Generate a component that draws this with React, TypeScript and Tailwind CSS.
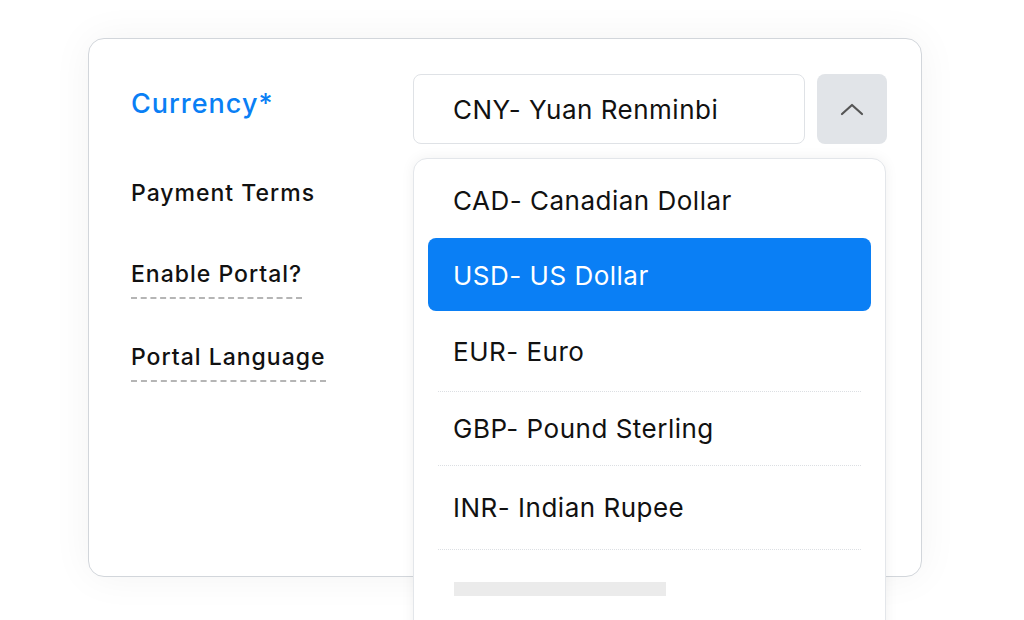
import React from "react";

const font = { fontFamily: "Inter, 'Noto Sans', sans-serif" };

function Label({ children, dashed, className }: { children: React.ReactNode; dashed?: boolean; className?: string }) {
  return (
    <div className={className}>
      <span
        className={
          "inline-block text-[23px] font-medium tracking-[1px] text-[#111] leading-[28px] " +
          (dashed ? "border-b-2 border-dashed border-[#b5b5b5] pb-[9px]" : "")
        }
      >
        {children}
      </span>
    </div>
  );
}

export default function App() {
  const dividers = "border-b border-dotted border-[#dcdfe3]";
  return (
    <div className="relative w-[1024px] h-[620px] overflow-hidden bg-white" style={font}>
      <div className="ml-[88px] mt-[38px] w-[834px] h-[539px] rounded-[16px] border border-[#d2d6db] bg-white shadow-[0_0_40px_rgba(0,0,0,0.05)] flex">
        <div className="w-[324px] pl-[42px] pt-[49px] flex flex-col">
          <div className="text-[27px] leading-[32px] tracking-[1px] text-[#0a7ff5] font-medium">Currency*</div>
          <Label className="mt-[59px]">Payment Terms</Label>
          <Label dashed className="mt-[53px]">Enable Portal?</Label>
          <Label dashed className="mt-[44px]">Portal Language</Label>
        </div>
        <div className="pt-[35px] flex gap-[12px] h-fit">
          <div className="w-[392px] h-[70px] rounded-[8px] border border-[#dfe2e6] flex items-center pl-[39px] text-[26px] tracking-[0.5px] text-[#111]">
            CNY- Yuan Renminbi
          </div>
          <div className="w-[70px] h-[70px] rounded-[8px] bg-[#e1e4e8] flex items-center justify-center">
            <svg width="24" height="14" viewBox="0 0 24 14" fill="none">
              <path d="M2 12 L12 3 L22 12" stroke="#555" strokeWidth="2.2" strokeLinecap="round" strokeLinejoin="round" />
            </svg>
          </div>
        </div>
      </div>

      <div className="absolute left-[413px] top-[158px] w-[473px] h-[500px] rounded-[14px] border border-[#e3e6ea] bg-white shadow-[0_0_14px_rgba(0,0,0,0.06)] px-[14px] text-[26px] tracking-[0.5px] text-[#111]">
        <div className="h-[79px] flex items-center pl-[25px] pt-[4px]">CAD- Canadian Dollar</div>
        <div className="h-[73px] flex items-center pl-[25px] pt-[2px] rounded-[8px] bg-[#0a7ff5] text-white">USD- US Dollar</div>
        <div className="mx-[10px]">
          <div className={"h-[81px] flex items-center pl-[15px] " + dividers}>EUR- Euro</div>
          <div className={"h-[74px] flex items-center pl-[15px] " + dividers}>GBP- Pound Sterling</div>
          <div className={"h-[84px] flex items-center pl-[15px] " + dividers}>INR- Indian Rupee</div>
          <div className="pt-[32px] pl-[16px]">
            <div className="w-[212px] h-[14px] bg-[#ebebeb]" />
          </div>
        </div>
      </div>
    </div>
  );
}
